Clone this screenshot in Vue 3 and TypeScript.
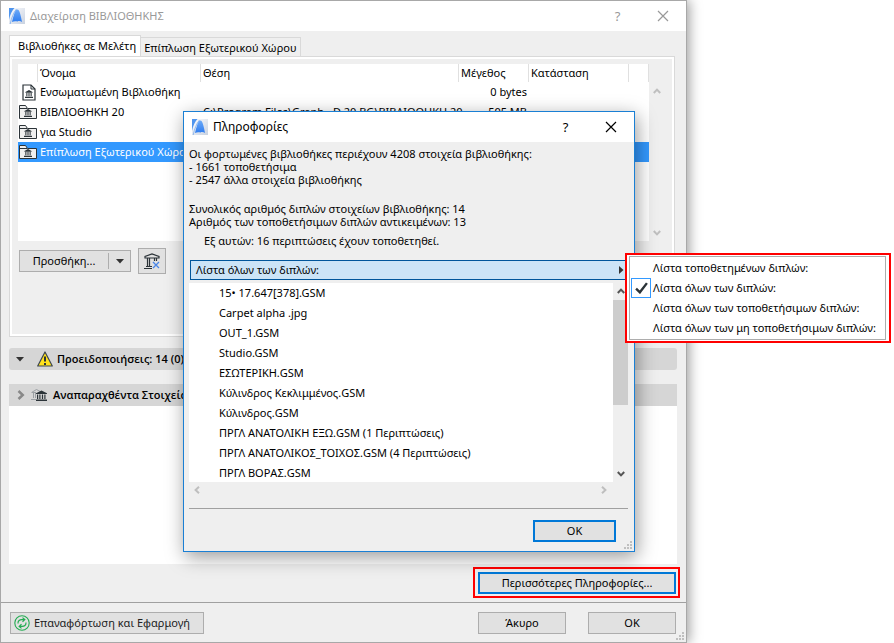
<script setup lang="ts">
import { ref } from 'vue'

interface Library {
  name: string
  path: string
  size: string
  embedded?: boolean
}

const libraries: Library[] = [
  { name: 'Ενσωματωμένη Βιβλιοθήκη', path: '', size: '0 bytes', embedded: true },
  { name: 'ΒΙΒΛΙΟΘΗΚΗ 20', path: 'C:\\Program Files\\Graph...D 20 BG\\ΒΙΒΛΙΟΘΗΚΗ 20', size: '505 MB' },
  { name: 'για Studio', path: '', size: '' },
  { name: 'Επίπλωση Εξωτερικού Χώρου', path: '', size: '' },
]
const selected = ref(3)

const duplicates: string[] = [
  '15• 17.647[378].GSM',
  'Carpet alpha .jpg',
  'OUT_1.GSM',
  'Studio.GSM',
  'ΕΣΩΤΕΡΙΚΗ.GSM',
  'Κύλινδρος Κεκλιμμένος.GSM',
  'Κύλινδρος.GSM',
  'ΠΡΓΛ ΑΝΑΤΟΛΙΚΗ ΕΞΩ.GSM (1 Περιπτώσεις)',
  'ΠΡΓΛ ΑΝΑΤΟΛΙΚΟΣ_ΤΟΙΧΟΣ.GSM (4 Περιπτώσεις)',
  'ΠΡΓΛ ΒΟΡΑΣ.GSM',
]

const filters: string[] = [
  'Λίστα τοποθετημένων διπλών:',
  'Λίστα όλων των διπλών:',
  'Λίστα όλων των τοποθετήσιμων διπλών:',
  'Λίστα όλων των μη τοποθετήσιμων διπλών:',
]
const activeFilter = ref(1)
</script>

<template>
  <div class="desktop">
    <svg class="defs" aria-hidden="true">
      <defs>
        <linearGradient id="logo-bg" x1="0" y1="0" x2="1" y2="1">
          <stop offset="0" stop-color="#fdfdff" />
          <stop offset="1" stop-color="#c9d2e0" />
        </linearGradient>
        <linearGradient id="logo-arc" x1="0" y1="0" x2="0" y2="1">
          <stop offset="0" stop-color="#6ba9f8" />
          <stop offset="1" stop-color="#2f7df0" />
        </linearGradient>
        <symbol id="logo" viewBox="0 0 16 16">
          <rect width="16" height="16" fill="url(#logo-bg)" />
          <path d="M0 0H5.5C3 2.5 1 7 0 12Z" fill="#4f95ee" />
          <path d="M1.2 16C2.5 10 4.500 4.500 7.500 1" fill="none" stroke="#8fb9ef" stroke-width="1" />
          <path d="M3 14C4.500 8 6 1.500 8.500 1.500C10.500 1.500 12 8 13 14C11.500 12.800 9.500 12.800 8.500 13.500C6.500 13 4.500 13.200 3 14Z" fill="url(#logo-arc)" />
        </symbol>
        <symbol id="museum" viewBox="0 0 10 9">
          <path d="M5 0 9 2.200V3H1V2.200Z M2 3.500h1.200v3.500H2z M4.400 3.500h1.200v3.500H4.400z M6.800 3.500h1.200v3.500H6.800z M.5 7.500h9V9H.5z" fill="currentColor" />
        </symbol>
        <symbol id="folder" viewBox="0 0 18 16">
          <path d="M.5 14.500V1.500H6.500L8.500 4.500H17.500V14.500Z" fill="#efefef" stroke="#2b3338" />
          <path d="M.5 4.500H8" stroke="#2b3338" />
          <use href="#museum" x="4" y="5" width="10" height="8" color="#2b3338" />
        </symbol>
        <symbol id="document" viewBox="0 0 14 17">
          <path d="M1 1H9L13 5V16H1Z" fill="#fff" stroke="#2b3338" stroke-width="1.200" />
          <path d="M9 1V5H13" fill="none" stroke="#2b3338" />
          <use href="#museum" x="2" y="6" width="10" height="8" color="#2b3338" />
        </symbol>
        <symbol id="cross" viewBox="0 0 12 12">
          <path d="M1 1 11 11M11 1 1 11" fill="none" stroke="currentColor" stroke-width="1.200" />
        </symbol>
        <symbol id="chevron" viewBox="0 0 8 6">
          <path d="M.8 5 4 1.600 7.200 5" fill="none" stroke="currentColor" stroke-width="2" />
        </symbol>
        <symbol id="grip" viewBox="0 0 8 8">
          <path d="M6 0h2v2H6zM3 3h2v2H3zM6 3h2v2H6zM0 6h2v2H0zM3 6h2v2H3zM6 6h2v2H6z" fill="#bfbfbf" />
        </symbol>
      </defs>
    </svg>

    <main class="window">
      <header class="titlebar inactive">
        <svg class="logo"><use href="#logo" /></svg>
        <h1>Διαχείριση ΒΙΒΛΙΟΘΗΚΗΣ</h1>
        <button class="caption" type="button" aria-label="Βοήθεια">?</button>
        <button class="caption" type="button" aria-label="Κλείσιμο">
          <svg class="cross"><use href="#cross" /></svg>
        </button>
      </header>

      <div class="body">
        <nav class="tabs" role="tablist">
          <button class="tab active" type="button" role="tab" aria-selected="true">Βιβλιοθήκες σε Μελέτη</button>
          <button class="tab" type="button" role="tab" aria-selected="false">Επίπλωση Εξωτερικού Χώρου</button>
        </nav>

        <section class="panel">
          <div class="list-area">
            <div class="list">
              <table>
                <colgroup>
                  <col class="c-icon"><col class="c-name"><col><col class="c-size"><col class="c-state"><col class="c-end">
                </colgroup>
                <thead>
                  <tr>
                    <th></th>
                    <th>Όνομα</th>
                    <th>Θέση</th>
                    <th>Μέγεθος</th>
                    <th>Κατάσταση</th>
                    <th></th>
                  </tr>
                </thead>
                <tbody>
                  <tr v-for="(lib, i) in libraries" :key="lib.name" :class="{ selected: i === selected }" @click="selected = i">
                    <td class="icon-cell">
                      <svg v-if="lib.embedded" class="document"><use href="#document" /></svg>
                      <svg v-else class="folder"><use href="#folder" /></svg>
                    </td>
                    <td>{{ lib.name }}</td>
                    <td>{{ lib.path }}</td>
                    <td class="num">{{ lib.size }}</td>
                    <td></td>
                    <td></td>
                  </tr>
                </tbody>
              </table>
            </div>
            <div class="vscroll idle">
              <svg class="chev"><use href="#chevron" /></svg>
              <svg class="chev down"><use href="#chevron" /></svg>
            </div>
          </div>

          <div class="tools">
            <div class="split">
              <button type="button" class="split-main">Προσθήκη...</button>
              <button type="button" class="split-arrow" aria-label="Περισσότερα">
                <svg class="caret" viewBox="0 0 8 5"><path d="M0 0H8L4 4.500Z" fill="#333" /></svg>
              </button>
            </div>
            <button type="button" class="btn tool" aria-label="Αφαίρεση">
              <svg class="remove" viewBox="0 0 16 16">
                <path d="M1 5V3.500L8 1L15 3.500V5ZM3.500 5V13.500M5.500 5V13.500M10.500 5V8M12.500 5V8M2 13.500H8M0 15.500H8" fill="none" stroke="#2b3338" stroke-width="1.200" />
                <path d="M9 9 15 15M15 9 9 15" stroke="#4a86e8" stroke-width="1.300" />
              </svg>
            </button>
          </div>
        </section>

        <button type="button" class="band warning">
          <svg class="caret" viewBox="0 0 8 5"><path d="M0 0H8L4 4.500Z" fill="#333" /></svg>
          <svg class="alert" viewBox="0 0 16 16">
            <path d="M8 1 15.300 15H.7Z" fill="#ffe11b" stroke="#3d4650" stroke-width="1.200" stroke-linejoin="round" />
            <path d="M7 5.500H9V10.500H7ZM7 12H9V14H7Z" fill="#2b3338" />
          </svg>
          <span>Προειδοποιήσεις: 14 (0)</span>
        </button>

        <button type="button" class="band missing">
          <svg class="chev side" ><use href="#chevron" /></svg>
          <svg class="museums" viewBox="0 0 16 12">
            <path d="M.5 3.500 5.500 .5 10 3M1 3.500H5M2.500 4V9M4.500 4V9M0 10.500H5" fill="none" stroke="#9a9fa3" />
            <path d="M10.500 1.500 16 4.200V5H5V4.200ZM6 5.500H7.200V10H6ZM8.300 5.500H9.500V10H8.300ZM10.900 5.500H12.100V10H10.900ZM13.300 5.500H14.500V10H13.300ZM5 10.500H16V12H5Z" fill="#2b3338" />
          </svg>
          <span>Αναπαραχθέντα Στοιχεία</span>
        </button>
        <div class="results"></div>

        <div class="more">
          <div class="highlight">
            <button type="button" class="btn primary">Περισσότερες Πληροφορίες...</button>
          </div>
        </div>
      </div>

      <footer class="actions">
        <button type="button" class="btn reload">
          <svg viewBox="0 0 16 16">
            <circle cx="8" cy="8" r="7.200" fill="none" stroke="#23ac52" stroke-width="1.100" />
            <path d="M4 8.500C3.800 6 5.500 4.300 8.500 4.600H10.500M8.500 2.600 10.800 4.600 8.500 6.700M12 7.500C12.200 10 10.500 11.700 7.500 11.400H5.500M7.500 9.300 5.200 11.400 7.500 13.400" fill="none" stroke="#23ac52" stroke-width="1.200" />
          </svg>
          <span>Επαναφόρτωση και Εφαρμογή</span>
        </button>
        <button type="button" class="btn push">Άκυρο</button>
        <button type="button" class="btn">OK</button>
        <svg class="grip"><use href="#grip" /></svg>
      </footer>
    </main>

    <section class="dialog" role="dialog" aria-labelledby="info-title">
      <header class="titlebar">
        <svg class="logo"><use href="#logo" /></svg>
        <h2 id="info-title">Πληροφορίες</h2>
        <button class="caption" type="button" aria-label="Βοήθεια">?</button>
        <button class="caption" type="button" aria-label="Κλείσιμο">
          <svg class="cross"><use href="#cross" /></svg>
        </button>
      </header>
      <div class="dialog-body">
        <ul class="summary">
          <li>Οι φορτωμένες βιβλιοθήκες περιέχουν 4208 στοιχεία βιβλιοθήκης:</li>
          <li>- 1661 τοποθετήσιμα</li>
          <li>- 2547 άλλα στοιχεία βιβλιοθήκης</li>
        </ul>
        <ul class="summary">
          <li>Συνολικός αριθμός διπλών στοιχείων βιβλιοθήκης: 14</li>
          <li>Αριθμός των τοποθετήσιμων διπλών αντικειμένων: 13</li>
        </ul>
        <p class="note">Εξ αυτών: 16 περιπτώσεις έχουν τοποθετηθεί.</p>
        <button type="button" class="filter" aria-haspopup="menu" aria-expanded="true">
          <span>{{ filters[activeFilter] }}</span>
          <svg class="play" viewBox="0 0 5 8"><path d="M0 0 4.500 4 0 8Z" fill="#333" /></svg>
        </button>
        <div class="dup-area">
          <ul class="dups">
            <li v-for="d in duplicates" :key="d">{{ d }}</li>
          </ul>
          <div class="vscroll">
            <svg class="chev"><use href="#chevron" /></svg>
            <div class="thumb"></div>
            <svg class="chev down"><use href="#chevron" /></svg>
          </div>
          <div class="hscroll">
            <svg class="chev left"><use href="#chevron" /></svg>
            <svg class="chev side"><use href="#chevron" /></svg>
          </div>
        </div>
        <div class="dialog-actions">
          <button type="button" class="btn primary ok">OK</button>
        </div>
      </div>
      <svg class="grip"><use href="#grip" /></svg>
    </section>

    <div class="menu-frame">
      <div class="menu" role="menu">
        <button
          v-for="(f, i) in filters"
          :key="f"
          type="button"
          role="menuitemradio"
          :aria-checked="i === activeFilter"
          @click="activeFilter = i"
        >
          <span class="mark" :class="{ on: i === activeFilter }">
            <svg v-if="i === activeFilter" viewBox="0 0 12 11"><path d="M1 6 4.500 9.500 11 1" fill="none" stroke="#2b3338" stroke-width="2.200" /></svg>
          </span>
          <span>{{ f }}</span>
        </button>
      </div>
    </div>
  </div>
</template>

<style>
body {
  background: #fff;
}
</style>

<style scoped>
.desktop,
.desktop * {
  box-sizing: border-box;
}
.desktop {
  position: relative;
  min-height: 100vh;
  display: flex;
  padding-right: 207px;
  overflow: hidden;
  font: 11px/20px "Noto Sans", "Open Sans", sans-serif;
  color: #000;
}
.defs {
  position: absolute;
  width: 0;
  height: 0;
}
svg {
  display: block;
  flex: none;
}
button {
  font: inherit;
  color: inherit;
  margin: 0;
  padding: 0;
  border: 0;
  background: none;
  white-space: nowrap;
}
ul,
p,
h1,
h2 {
  margin: 0;
  padding: 0;
  list-style: none;
}

.window {
  position: relative;
  flex: 1;
  min-width: 0;
  display: flex;
  flex-direction: column;
  border: 1px solid #a8a8a8;
  background: #efefef;
  box-shadow: 2px 0 12px rgba(0, 0, 0, 0.4);
}
.titlebar {
  display: flex;
  align-items: center;
  height: 30px;
  padding: 0 1px 0 8px;
  background: #fff;
}
.titlebar h1,
.titlebar h2 {
  flex: 1;
  margin-left: 5px;
  font-size: 12px;
  font-weight: 400;
}
.titlebar h1 {
  font-size: 11px;
}
.inactive {
  color: #999;
}
.logo {
  width: 16px;
  height: 16px;
}
.caption {
  display: grid;
  place-items: center;
  width: 45px;
  height: 28px;
  font-size: 13px;
}
.cross {
  width: 12px;
  height: 12px;
}

.body {
  flex: 1;
  display: flex;
  flex-direction: column;
  padding: 4px 9px 4px 8px;
}
.tabs {
  display: flex;
  align-items: flex-end;
  margin-bottom: -1px;
}
.tab {
  height: 20px;
  padding: 0 4px 0 3px;
  border: 1px solid #d9d9d9;
  border-left: 0;
  line-height: 20px;
}
.tab.active {
  height: 22px;
  padding: 0 4px 0 8px;
  border-left: 1px solid #d9d9d9;
  border-bottom-color: #fff;
  background: #fff;
}
.panel {
  margin-right: 2px;
  border: 1px solid #d9d9d9;
  height: 281px;
  padding: 7px 0 0 8px;
  box-shadow: inset 0 0 0 2px #fff;
}
.list-area {
  display: grid;
  grid-template-columns: 1fr 25px;
}
.list {
  height: 177px;
  background: #fff;
}
table {
  width: 100%;
  table-layout: fixed;
  border-collapse: separate;
  border-spacing: 0;
}
.c-icon { width: 20px; }
.c-name { width: 163px; }
.c-size { width: 70px; }
.c-state { width: 100px; }
.c-end { width: 20px; }
th,
td {
  height: 20px;
  padding: 0 2px;
  font-weight: 400;
  text-align: left;
  white-space: nowrap;
}
th {
  height: 18px;
  line-height: 18px;
  border-right: 1px solid #e0e0e0;
}
.num {
  text-align: right;
}
.icon-cell {
  padding: 0 0 0 1px;
}
.folder {
  width: 18px;
  height: 16px;
}
.document {
  width: 14px;
  height: 17px;
  margin-left: 3px;
}
.selected {
  background: #3399ff;
  color: #fff;
}

.vscroll {
  display: flex;
  flex-direction: column;
  align-items: center;
  justify-content: space-between;
  padding: 5px 0;
  color: #555;
}
.vscroll.idle {
  align-items: flex-start;
  padding: 24px 0 5px 4px;
  color: #bfbfbf;
}
.chev {
  width: 8px;
  height: 6px;
}
.down {
  transform: rotate(180deg);
}
.side {
  transform: rotate(90deg);
}
.left {
  transform: rotate(-90deg);
}

.tools {
  display: flex;
  align-items: center;
  gap: 7px;
  margin: 7px 0 0 1px;
}
.split {
  display: flex;
  align-items: center;
  width: 112px;
  height: 22px;
  border: 1px solid #adadad;
  background: #e1e1e1;
}
.split-main {
  flex: 1;
  line-height: 16px;
  border-right: 1px solid #adadad;
}
.split-arrow {
  display: grid;
  place-items: center;
  width: 21px;
  height: 16px;
}
.caret {
  width: 8px;
  height: 5px;
}
.btn {
  width: 88px;
  height: 22px;
  border: 1px solid #adadad;
  background: #e1e1e1;
  line-height: 18px;
}
.btn.tool {
  display: grid;
  place-items: center;
  width: 28px;
  height: 26px;
}
.remove {
  width: 16px;
  height: 16px;
}

.band {
  display: flex;
  align-items: center;
  height: 22px;
  font-family: "Open Sans", "Noto Sans", sans-serif;
  font-weight: 600;
  color: #000;
  background: #d6d6d6;
}
.warning {
  margin: 11px 0 14px;
  padding-left: 7px;
  border-radius: 3px;
}
.warning .alert {
  width: 16px;
  height: 16px;
  margin: 0 4px 0 13px;
}
.missing {
  padding-left: 7px;
}
.missing .chev {
  width: 10px;
  height: 8px;
  color: #888;
}
.museums {
  width: 16px;
  height: 12px;
  margin: 0 6px 0 5px;
}
.results {
  flex: 1;
  min-height: 158px;
  background: #fff;
}
.more {
  display: flex;
  justify-content: flex-end;
  margin: 3px -3px 0 0;
}
.highlight {
  padding: 3px 2px 2px 3px;
  border: 2px solid #f00;
}
.btn.primary {
  display: block;
  width: 198px;
  border: 2px solid #0078d7;
}

.actions {
  display: flex;
  gap: 22px;
  height: 40px;
  padding: 9px 10px 0 9px;
  border-top: 1px solid #a0a0a0;
}
.btn.push {
  margin-left: auto;
}
.btn.reload {
  display: flex;
  align-items: center;
  gap: 4px;
  width: 194px;
  padding-left: 3px;
  color: #222;
}
.reload svg {
  width: 16px;
  height: 16px;
}
.grip {
  position: absolute;
  right: 2px;
  bottom: 2px;
  width: 8px;
  height: 8px;
}

.dialog {
  position: absolute;
  left: 183px;
  top: 111px;
  width: 452px;
  border: 1px solid #1a7fd4;
  background: #efefef;
  box-shadow: 2px 5px 18px rgba(0, 0, 0, 0.4);
}
.dialog-body {
  padding: 5px 6px 9px 5px;
}
.summary {
  margin-bottom: 16px;
  line-height: 13px;
}
.summary + .summary {
  margin-bottom: 3px;
}
.note {
  padding-left: 15px;
}
.filter {
  display: flex;
  align-items: center;
  justify-content: space-between;
  width: 438px;
  height: 20px;
  margin: 9px 0 3px 1px;
  padding: 0 3px 0 5px;
  border: 1px solid #00559b;
  background: #cce4f7;
}
.play {
  width: 5px;
  height: 8px;
}
.dup-area {
  display: grid;
  grid-template-columns: 1fr 15px;
  border-bottom: 1px solid #a0a0a0;
}
.dups {
  height: 199px;
  overflow: hidden;
  padding-left: 30px;
  background: #fff;
}
.thumb {
  width: 15px;
  height: 105px;
  margin: 6px 0 auto;
  background: #cdcdcd;
}
.hscroll {
  display: flex;
  justify-content: space-between;
  height: 26px;
  padding: 5px 5px 0 4px;
  color: #bfbfbf;
}
.dialog-actions {
  display: flex;
  justify-content: flex-end;
  padding: 11px 12px 0 0;
}
.btn.primary.ok {
  width: 83px;
}

.menu-frame {
  position: absolute;
  left: 625px;
  top: 253px;
  padding: 1px 3px 1px 2px;
  border: 2px solid #f00;
  background: #fff;
}
.menu {
  padding: 1px 9px 1px 1px;
  border: 1px solid #adadad;
}
.menu button {
  display: flex;
  align-items: center;
  gap: 2px;
  height: 20px;
}
.mark {
  display: grid;
  place-items: center;
  width: 20px;
  height: 20px;
}
.mark.on {
  border: 1px solid #3399ff;
}
.mark svg {
  width: 13px;
  height: 12px;
}
</style>
